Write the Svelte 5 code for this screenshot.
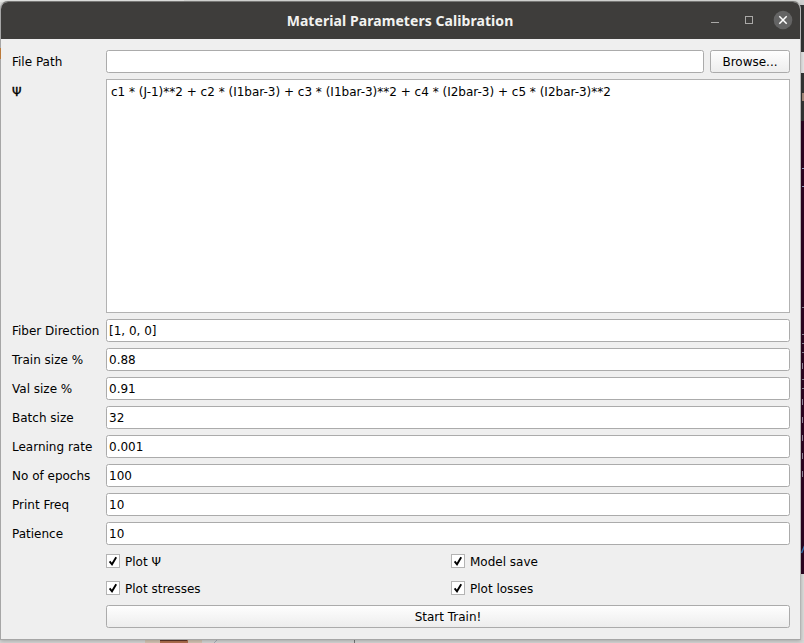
<script>
  const fields = [
    ['Fiber Direction', '[1, 0, 0]'],
    ['Train size %', '0.88'],
    ['Val size %', '0.91'],
    ['Batch size', '32'],
    ['Learning rate', '0.001'],
    ['No of epochs', '100'],
    ['Print Freq', '10'],
    ['Patience', '10']
  ];
  const checks = ['Plot Ψ', 'Model save', 'Plot stresses', 'Plot losses'];
  const energy = 'c1 * (J-1)**2 + c2 * (I1bar-3) + c3 * (I1bar-3)**2 + c4 * (I2bar-3) + c5 * (I2bar-3)**2';
</script>

<div class="desktop">
  <svg class="behind" width="804" height="643" viewBox="0 0 804 643" aria-hidden="true">
    <rect width="804" height="643" fill="#dcdddb" />
    <path d="M0 0H184V2H0z" fill="#e9eae8" />
    <path d="M800 5h4V121h-4z" fill="#343434" />
    <path d="M800 52h4V73h-4z" fill="#e7e7e7" />
    <path d="M800 0h4V5h-4z" fill="#d0d0d0" />
    <path d="M800 121h4V574h-4z" fill="#2b0420" />
    <path d="M803 93v8" stroke="#a88b7b" stroke-width="2" />
    <path d="M802 168.500h2M802 186.500h2" stroke="#9aa8cc" />
    <path d="M802 307.500h2M802 334.500h2M802 343.500h2M802 352.500h2M802 379.500h2M802 388.500h2" stroke="#8d8798" />
    <path d="M802.500 363v6M802.500 399v6M802.500 417v6M802.500 435v6M802.500 453v6M802.500 471v6" stroke="#9a8ba1" />
    <path d="M801.500 553l3-7" stroke="#326eac" stroke-width="1.500" />
    <path d="M0 640H804V643H0z" fill="#d7d8d7" />
    <path d="M145 640h57v3h-57z" fill="#d7c7b6" />
    <path d="M160 640h28v3h-28z" fill="#b3714f" />
    <path d="M160 640h27v1h-27z" fill="#5f3526" />
    <path d="M214 643l5-5" stroke="#a8adb9" />
    <path d="M354.500 640v3" stroke="#777" />
  </svg>

  <section class="window">
    <header>
      <h1>Material Parameters Calibration</h1>
      <div class="controls">
        <svg width="90" height="24" viewBox="0 0 90 24">
          <path d="M6 14.500h8" stroke="#aaa9a7" />
          <rect x="40.500" y="8.500" width="7" height="7" fill="none" stroke="#aaa9a7" />
          <circle cx="78" cy="12" r="9.300" fill="#646464" />
          <path d="M74.300 8.300l7.400 7.400M81.700 8.300l-7.400 7.400" stroke="#fff" stroke-width="1.500" />
        </svg>
      </div>
    </header>

    <main>
      <div class="label">File Path</div>
      <div class="file">
        <div class="input"></div>
        <button class="browse">Browse...</button>
      </div>
      <div class="label psi">Ψ</div>
      <div class="area">{energy}</div>
      {#each fields as [name, value]}
        <div class="label">{name}</div>
        <div class="input">{value}</div>
      {/each}
      <div class="checks">
        {#each checks as name}
          <div class="check">
            <svg width="14" height="14" viewBox="0 0 14 14">
              <rect x="0.500" y="0.500" width="13" height="13" fill="#fff" stroke="#b4b4b4" />
              <path d="M3.600 7.300L6 10.300L10.200 3.300" fill="none" stroke="#000" stroke-width="1.900" />
            </svg>
            <span>{name}</span>
          </div>
        {/each}
      </div>
      <button class="start">Start Train!</button>
    </main>
  </section>
  <div class="edge-mark"></div>
</div>

<style>
  :global(body) { overflow: hidden; }
  .desktop {
    position: relative;
    width: 804px;
    height: 643px;
    overflow: hidden;
    box-sizing: border-box;
    padding-top: 1px;
    font: 12px/14px "DejaVu Sans", sans-serif;
    color: #000;
  }
  .behind { position: absolute; top: 0; left: 0; }
  .edge-mark {
    position: absolute;
    top: 48px;
    left: 0;
    width: 1px;
    height: 11px;
    background: #bb7a3b;
  }
  .window {
    position: relative;
    box-sizing: border-box;
    width: 801px;
    height: 639px;
    border: 1px solid #a6a6a6;
    border-top-color: #777775;
    border-right-color: #b4b4b4;
    border-radius: 8px 8px 0 0;
    background: #efefef;
    box-shadow: 0 1px 4px rgba(0, 0, 0, 0.25);
    overflow: hidden;
  }
  header {
    display: grid;
    grid-template-columns: 1fr auto 1fr;
    align-items: center;
    height: 37px;
    margin-right: -1px;
    background: #3e3d3b;
  }
  h1 {
    grid-column: 2;
    margin: 0;
    padding-right: 2px;
    font: bold 14px/20px "Noto Sans", sans-serif;
    letter-spacing: 0.07px;
    color: #f2f2f0;
    white-space: nowrap;
  }
  .controls { justify-self: end; display: flex; margin: 0 6px 1px 0; }
  main {
    display: grid;
    grid-template-columns: 88px 684px;
    grid-template-rows: 23px 234px repeat(8, 23px) 48px 23px;
    gap: 6px;
    padding: 11px 11px 0;
  }
  .label { align-self: center; white-space: nowrap; }
  .psi { align-self: start; padding-top: 6px; -webkit-text-stroke: 0.35px #000; }
  .file { display: grid; grid-template-columns: 598px 80px; gap: 6px; }
  .input, .area, button {
    box-sizing: border-box;
    border: 1px solid #ababab;
    background: #fff;
  }
  .input { border-radius: 2.500px; padding: 4px 2px; line-height: 14px; }
  .area { padding: 5px 4px; border-color: #b2b2b2; white-space: nowrap; }
  button {
    margin: 0;
    padding: 0;
    border-radius: 2.500px;
    font: inherit;
    color: inherit;
    background: linear-gradient(#fefefe, #ededed);
  }
  .checks {
    grid-column: 2;
    display: grid;
    grid-template-columns: 345px 1fr;
    grid-template-rows: 21px 21px;
    row-gap: 6px;
  }
  .check { display: flex; align-items: center; gap: 5px; height: 20px; }
  .check span { padding-top: 2px; }
  .start { grid-column: 2; }
</style>
